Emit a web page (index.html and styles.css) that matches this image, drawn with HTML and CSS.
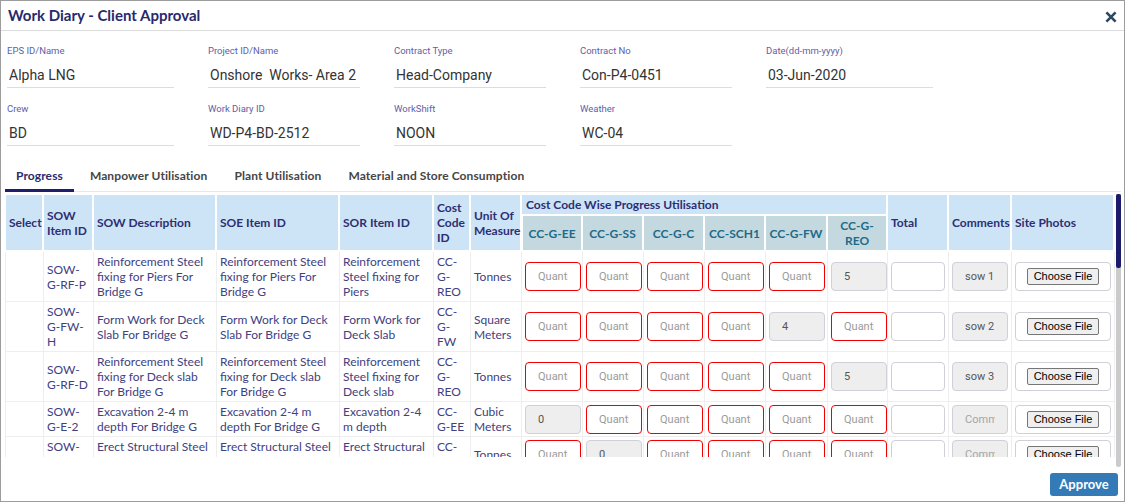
FILE: index.html
```html
<!DOCTYPE html>
<html lang="en">
<head>
<meta charset="utf-8">
<title>Work Diary - Client Approval</title>
<link rel="stylesheet" href="styles.css">
</head>
<body>
<div class="modal">
  <header class="modal-header">
    <h1 class="modal-title">Work Diary - Client Approval</h1>
    <button class="close-btn" type="button" aria-label="Close">
      <svg width="12" height="12" viewBox="0 0 12 12"><path d="M1.4 1.4 L10.6 10.6 M10.6 1.4 L1.4 10.6" stroke="#2c4862" stroke-width="2.6" fill="none"/></svg>
    </button>
  </header>

  <section class="info-grid">
    <div class="field"><span class="field-label">EPS ID/Name</span><div class="field-value">Alpha LNG</div></div>
    <div class="field"><span class="field-label">Project ID/Name</span><div class="field-value">Onshore&nbsp; Works- Area 2</div></div>
    <div class="field"><span class="field-label">Contract Type</span><div class="field-value">Head-Company</div></div>
    <div class="field"><span class="field-label">Contract No</span><div class="field-value">Con-P4-0451</div></div>
    <div class="field"><span class="field-label">Date(dd-mm-yyyy)</span><div class="field-value">03-Jun-2020</div></div>
    <div class="field"><span class="field-label">Crew</span><div class="field-value">BD</div></div>
    <div class="field"><span class="field-label">Work Diary ID</span><div class="field-value">WD-P4-BD-2512</div></div>
    <div class="field"><span class="field-label">WorkShift</span><div class="field-value">NOON</div></div>
    <div class="field"><span class="field-label">Weather</span><div class="field-value">WC-04</div></div>
  </section>

  <nav class="tabs">
    <a class="tab active">Progress</a>
    <a class="tab">Manpower Utilisation</a>
    <a class="tab">Plant Utilisation</a>
    <a class="tab">Material and Store Consumption</a>
  </nav>

  <div class="table-area">
    <div class="table-viewport">
      <table class="grid">
        <colgroup>
          <col class="w-select"><col class="w-sow"><col class="w-desc"><col class="w-desc"><col class="w-sor"><col class="w-cc"><col class="w-uom">
          <col class="w-q"><col class="w-q"><col class="w-q"><col class="w-q"><col class="w-q2"><col class="w-q3">
          <col class="w-total"><col class="w-comm"><col>
        </colgroup>
        <thead>
          <tr>
            <th rowspan="2">Select</th>
            <th rowspan="2">SOW Item ID</th>
            <th rowspan="2">SOW Description</th>
            <th rowspan="2">SOE Item ID</th>
            <th rowspan="2">SOR Item ID</th>
            <th rowspan="2">Cost Code ID</th>
            <th rowspan="2">Unit Of Measure</th>
            <th colspan="6" class="group">Cost Code Wise Progress Utilisation</th>
            <th rowspan="2">Total</th>
            <th rowspan="2">Comments</th>
            <th rowspan="2">Site Photos</th>
          </tr>
          <tr>
            <th class="cc">CC-G-EE</th>
            <th class="cc">CC-G-SS</th>
            <th class="cc">CC-G-C</th>
            <th class="cc">CC-SCH1</th>
            <th class="cc">CC-G-FW</th>
            <th class="cc">CC-G-REO</th>
          </tr>
        </thead>
        <tbody>
          <tr>
            <td></td><td>SOW-G-RF-P</td>
            <td>Reinforcement Steel fixing for Piers For Bridge G</td>
            <td>Reinforcement Steel fixing for Piers For Bridge G</td>
            <td>Reinforcement Steel fixing for Piers</td>
            <td>CC-G-REO</td><td>Tonnes</td>
            <td class="in"><input class="qty" placeholder="Quantity"></td>
            <td class="in"><input class="qty" placeholder="Quantity"></td>
            <td class="in"><input class="qty" placeholder="Quantity"></td>
            <td class="in"><input class="qty" placeholder="Quantity"></td>
            <td class="in"><input class="qty" placeholder="Quantity"></td>
            <td class="in"><input class="qty" value="5" disabled></td>
            <td class="in"><input class="total"></td>
            <td class="in"><input class="comment" value="sow 1" disabled></td>
            <td class="in"><div class="file-box"><button class="file-btn" type="button">Choose File</button></div></td>
          </tr>
          <tr>
            <td></td><td>SOW-G-FW-H</td>
            <td>Form Work for Deck Slab For Bridge G</td>
            <td>Form Work for Deck Slab For Bridge G</td>
            <td>Form Work for Deck Slab</td>
            <td>CC-G-FW</td><td>Square Meters</td>
            <td class="in"><input class="qty" placeholder="Quantity"></td>
            <td class="in"><input class="qty" placeholder="Quantity"></td>
            <td class="in"><input class="qty" placeholder="Quantity"></td>
            <td class="in"><input class="qty" placeholder="Quantity"></td>
            <td class="in"><input class="qty" value="4" disabled></td>
            <td class="in"><input class="qty" placeholder="Quantity"></td>
            <td class="in"><input class="total"></td>
            <td class="in"><input class="comment" value="sow 2" disabled></td>
            <td class="in"><div class="file-box"><button class="file-btn" type="button">Choose File</button></div></td>
          </tr>
          <tr>
            <td></td><td>SOW-G-RF-D</td>
            <td>Reinforcement Steel fixing for Deck slab For Bridge G</td>
            <td>Reinforcement Steel fixing for Deck slab For Bridge G</td>
            <td>Reinforcement Steel fixing for Deck slab</td>
            <td>CC-G-REO</td><td>Tonnes</td>
            <td class="in"><input class="qty" placeholder="Quantity"></td>
            <td class="in"><input class="qty" placeholder="Quantity"></td>
            <td class="in"><input class="qty" placeholder="Quantity"></td>
            <td class="in"><input class="qty" placeholder="Quantity"></td>
            <td class="in"><input class="qty" placeholder="Quantity"></td>
            <td class="in"><input class="qty" value="5" disabled></td>
            <td class="in"><input class="total"></td>
            <td class="in"><input class="comment" value="sow 3" disabled></td>
            <td class="in"><div class="file-box"><button class="file-btn" type="button">Choose File</button></div></td>
          </tr>
          <tr>
            <td></td><td>SOW-G-E-2</td>
            <td>Excavation 2-4 m depth For Bridge G</td>
            <td>Excavation 2-4 m depth For Bridge G</td>
            <td>Excavation 2-4 m depth</td>
            <td>CC-G-EE</td><td>Cubic Meters</td>
            <td class="in"><input class="qty" value="0" disabled></td>
            <td class="in"><input class="qty" placeholder="Quantity"></td>
            <td class="in"><input class="qty" placeholder="Quantity"></td>
            <td class="in"><input class="qty" placeholder="Quantity"></td>
            <td class="in"><input class="qty" placeholder="Quantity"></td>
            <td class="in"><input class="qty" placeholder="Quantity"></td>
            <td class="in"><input class="total"></td>
            <td class="in"><input class="comment" placeholder="Comments" disabled></td>
            <td class="in"><div class="file-box"><button class="file-btn" type="button">Choose File</button></div></td>
          </tr>
          <tr>
            <td></td><td>SOW-G-SS</td>
            <td>Erect Structural Steel for Bridge G</td>
            <td>Erect Structural Steel for Bridge G</td>
            <td>Erect Structural Steel</td>
            <td>CC-G-SS</td><td>Tonnes</td>
            <td class="in"><input class="qty" placeholder="Quantity"></td>
            <td class="in"><input class="qty" value="0" disabled></td>
            <td class="in"><input class="qty" placeholder="Quantity"></td>
            <td class="in"><input class="qty" placeholder="Quantity"></td>
            <td class="in"><input class="qty" placeholder="Quantity"></td>
            <td class="in"><input class="qty" placeholder="Quantity"></td>
            <td class="in"><input class="total"></td>
            <td class="in"><input class="comment" placeholder="Comments" disabled></td>
            <td class="in"><div class="file-box"><button class="file-btn" type="button">Choose File</button></div></td>
          </tr>
          <tr>
            <td></td><td>SOW-H-RF-P</td>
            <td>Reinforcement Steel fixing for Piers For Bridge H</td>
            <td>Reinforcement Steel fixing for Piers For Bridge H</td>
            <td>Reinforcement Steel fixing for Piers</td>
            <td>CC-G-REO</td><td>Tonnes</td>
            <td class="in"><input class="qty" placeholder="Quantity"></td>
            <td class="in"><input class="qty" placeholder="Quantity"></td>
            <td class="in"><input class="qty" placeholder="Quantity"></td>
            <td class="in"><input class="qty" placeholder="Quantity"></td>
            <td class="in"><input class="qty" placeholder="Quantity"></td>
            <td class="in"><input class="qty" value="3" disabled></td>
            <td class="in"><input class="total"></td>
            <td class="in"><input class="comment" placeholder="Comments" disabled></td>
            <td class="in"><div class="file-box"><button class="file-btn" type="button">Choose File</button></div></td>
          </tr>
        </tbody>
      </table>
    </div>
    <div class="scrollbar"><div class="scroll-thumb"></div></div>
  </div>

  <footer class="modal-footer">
    <button class="btn-approve" type="button">Approve</button>
  </footer>
</div>
</body>
</html>
```

FILE: styles.css
```css
* { box-sizing: border-box; }

html, body {
  margin: 0;
  padding: 0;
  background: #fff;
}

body {
  font-family: Lato, "Noto Sans", sans-serif;
}

.modal {
  width: 1125px;
  height: 502px;
  border: 1px solid #9c9c9c;
  display: flex;
  flex-direction: column;
  overflow: hidden;
}

/* header */
.modal-header {
  flex: none;
  height: 30px;
  border-bottom: 1px solid #dcdcdc;
  display: flex;
  align-items: center;
  justify-content: space-between;
  padding: 0 7px;
}

.modal-title {
  margin: 0;
  font: 700 15px/1 Lato, sans-serif;
  color: #28296c;
}

.close-btn {
  border: 0;
  background: none;
  padding: 0;
  margin-top: 3px;
  width: 12px;
  height: 12px;
  display: block;
  cursor: pointer;
}
.close-btn svg { display: block; }

/* info fields */
.info-grid {
  flex: none;
  display: grid;
  grid-template-columns: 167px 152px 152px 152px 167px;
  column-gap: 34px;
  row-gap: 15px;
  padding: 14px 0 0 6px;
}

.field-label {
  display: block;
  font: 400 9.5px/12px Roboto, "Liberation Sans", sans-serif;
  color: #6060a8;
  margin-bottom: 8px;
  white-space: nowrap;
}

.field-value {
  height: 23px;
  font: 400 14px/21px Roboto, "Liberation Sans", sans-serif;
  color: #333;
  padding-left: 2px;
  border-bottom: 1px solid #dddddd;
  white-space: nowrap;
}

/* tabs */
.tabs {
  flex: none;
  display: flex;
  gap: 5px;
  margin: 17px 3px 0 4px;
  border-bottom: 1px solid #e8e8e8;
}

.tab {
  padding: 0 11px;
  font: 700 12px/26px Lato, sans-serif;
  letter-spacing: 0.1px;
  color: #464646;
  border-bottom: 3px solid transparent;
  margin-bottom: -1px;
  cursor: pointer;
}

.tab.active {
  color: #2b2b6e;
  border-bottom-color: #1f1e6c;
}

/* table with its scroll indicator */
.table-area {
  flex: none;
  display: flex;
  align-items: flex-start;
  height: 273px;
  margin: 2px 3px 0 4px;
}

.table-viewport {
  flex: 1;
  min-width: 0;
  height: 263px;
  overflow: hidden;
}

.scrollbar {
  flex: none;
  width: 5px;
  height: 273px;
  margin-left: 1px;
  background: #cbcbcb;
  border-radius: 0 0 3px 3px;
}

.scroll-thumb {
  height: 74px;
  background: #1c1b6b;
  border-radius: 2px;
}

.grid {
  width: 100%;
  table-layout: fixed;
  border-collapse: separate;
  border-spacing: 0;
}

.w-select { width: 39px; }
.w-sow { width: 50px; }
.w-desc { width: 123px; }
.w-sor { width: 94px; }
.w-cc { width: 37px; }
.w-uom { width: 51px; }
.w-q { width: 61px; }
.w-q2 { width: 62px; }
.w-q3 { width: 60px; }
.w-total { width: 61px; }
.w-comm { width: 63px; }

.grid th {
  background: #cce4f6;
  color: #2e2e72;
  font: 700 12px/15px Lato, sans-serif;
  text-align: left;
  vertical-align: middle;
  padding: 2px 3px;
  border-right: 2px solid #fff;
  border-bottom: 2px solid #fff;
}

.grid thead tr:first-child th { border-top: 1px solid #fff; }
.grid th:first-child { border-left: 1px solid #fff; }

.grid th.group { padding-left: 4px; }

.grid th.cc {
  background: #c3d9df;
  color: #1f6a88;
  text-align: center;
  border-top: 0;
}

.grid td {
  font: 400 12px/15px Lato, sans-serif;
  color: #41417f;
  padding: 2px 3px;
  vertical-align: middle;
  border-right: 1px solid #eeeeee;
  border-bottom: 1px solid #eeeeee;
}
.grid td:first-child { border-left: 1px solid #eeeeee; }

.qty, .total, .comment {
  display: block;
  height: 29px;
  border-radius: 4px;
  padding: 0 12px;
  font: 400 11px Roboto, "Liberation Sans", sans-serif;
  color: #555;
  background: #fff;
  outline: none;
  margin: 0;
}

.qty { width: 56px; border: 1px solid #f00000; }
.total { width: 54px; border: 1px solid #cfd0d8; }
.comment { width: 56px; border: 1px solid #cfd0d8; }

.qty::placeholder, .comment::placeholder { color: #9a9a9a; }

.qty:disabled, .comment:disabled {
  background: #eeeeee;
  border-color: #cfd0d8;
  color: #555;
  -webkit-text-fill-color: #555;
  opacity: 1;
}
.comment:disabled::placeholder { color: #a5a5a5; -webkit-text-fill-color: #a5a5a5; }

.file-box {
  height: 29px;
  border: 1px solid #cfd0d8;
  border-radius: 4px;
  display: flex;
  align-items: center;
  justify-content: center;
}

.file-btn {
  height: 17px;
  padding: 0 6px;
  font: 400 11px/15px "Liberation Sans", Arial, sans-serif;
  color: #000;
  background: #efefef;
  border: 1px solid #767676;
  border-radius: 2px;
  white-space: nowrap;
}

/* footer */
.modal-footer {
  flex: none;
  display: flex;
  justify-content: flex-end;
  padding: 6px 6px 0 0;
}

.btn-approve {
  width: 68px;
  height: 23px;
  border: 0;
  border-radius: 3px;
  background: #337ab7;
  color: #fff;
  font: 700 13px/23px Lato, sans-serif;
  padding: 0;
  cursor: pointer;
}
```
